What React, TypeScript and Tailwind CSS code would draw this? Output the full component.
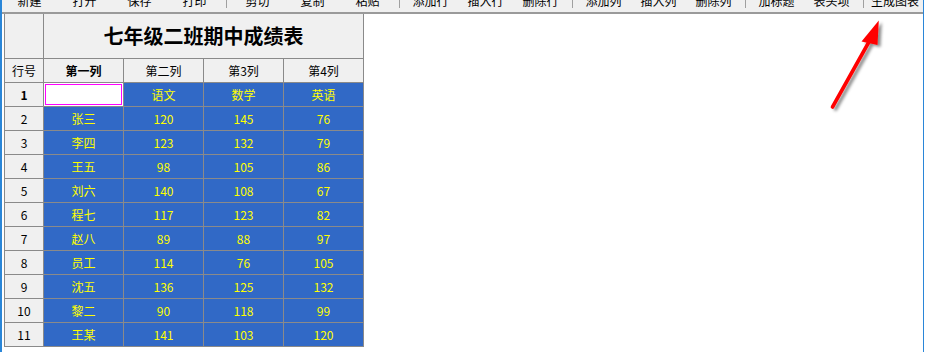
import React from 'react';

// ─── Data ─────────────────────────────────────────────────────────────────────

type ToolItem = { label: string } | 'sep';

const tools: ToolItem[] = [
    { label: '新建' },
    { label: '打开' },
    { label: '保存' },
    { label: '打印' },
    'sep',
    { label: '剪切' },
    { label: '复制' },
    { label: '粘贴' },
    'sep',
    { label: '添加行' },
    { label: '插入行' },
    { label: '删除行' },
    'sep',
    { label: '添加列' },
    { label: '插入列' },
    { label: '删除列' },
    'sep',
    { label: '加标题' },
    { label: '表头项' },
    'sep',
    { label: '生成图表' },
];

const rows: string[][] = [
    ['张三', '120', '145', '76'],
    ['李四', '123', '132', '79'],
    ['王五', '98', '105', '86'],
    ['刘六', '140', '108', '67'],
    ['程七', '117', '123', '82'],
    ['赵八', '89', '88', '97'],
    ['员工', '114', '76', '105'],
    ['沈五', '136', '125', '132'],
    ['黎二', '90', '118', '99'],
    ['王某', '141', '103', '120'],
];

const font = "font-['Segoe_UI','Noto_Sans_CJK_SC',sans-serif]";

// ─── Pieces ───────────────────────────────────────────────────────────────────

function Toolbar() {
    return (
        <div className="h-[12px] overflow-hidden bg-[#f0f0f0]">
            <div className="-mt-[9px] flex h-[20px] items-stretch">
                {tools.map((t, i) =>
                    t === 'sep' ? (
                        <div key={i} className="flex w-[8px] justify-center">
                            <div className="mt-[9px] h-[8px] w-px bg-[#a0a0a0]" />
                        </div>
                    ) : (
                        <div
                            key={i}
                            className={`flex items-center justify-center text-[12px] leading-[20px] text-black ${
                                i === tools.length - 1 ? 'w-[56px]' : 'w-[55px]'
                            }`}
                        >
                            {t.label}
                        </div>
                    ),
                )}
            </div>
        </div>
    );
}

function HeadCell({ children, bold }: { children?: React.ReactNode; bold?: boolean }) {
    return (
        <div
            className={`flex h-[23px] items-center justify-center bg-[#f0f0f0] text-[12px] text-black ${
                bold ? 'font-bold' : ''
            }`}
        >
            {children}
        </div>
    );
}

function DataCell({ children }: { children?: React.ReactNode }) {
    return (
        <div className="flex h-[23px] items-center justify-center bg-[#3169c6] text-[12px] text-[#ffff00]">
            {children}
        </div>
    );
}

function ScoreTable() {
    return (
        <div className="grid w-fit grid-cols-[38px_79px_79px_79px_79px] gap-px bg-[#8a8a8a] px-px pb-px">
            {/* title row */}
            <div className="h-[44px] bg-[#f0f0f0]" />
            <div className="col-span-4 flex h-[44px] items-center justify-center bg-[#f0f0f0] text-[20px] font-bold text-black">
                七年级二班期中成绩表
            </div>

            {/* column header row */}
            <HeadCell>行号</HeadCell>
            <HeadCell bold>第一列</HeadCell>
            <HeadCell>第二列</HeadCell>
            <HeadCell>第3列</HeadCell>
            <HeadCell>第4列</HeadCell>

            {/* row 1: subject names, first cell selected */}
            <HeadCell bold>1</HeadCell>
            <div className="h-[23px] bg-white p-px">
                <div className="h-full border border-[#ff00ff]" />
            </div>
            <DataCell>语文</DataCell>
            <DataCell>数学</DataCell>
            <DataCell>英语</DataCell>

            {rows.map((r, i) => (
                <React.Fragment key={i}>
                    <HeadCell>{i + 2}</HeadCell>
                    {r.map((v, j) => (
                        <DataCell key={j}>{v}</DataCell>
                    ))}
                </React.Fragment>
            ))}
        </div>
    );
}

function Arrow() {
    return (
        <svg className="pointer-events-none absolute left-0 top-0" width={929} height={352}>
            <defs>
                <filter id="sh" x="-50%" y="-50%" width="200%" height="200%">
                    <feDropShadow dx="3" dy="2" stdDeviation="1.6" floodColor="#000" floodOpacity="0.45" />
                </filter>
            </defs>
            <g filter="url(#sh)">
                <path d="M832.5 107 L870 40" stroke="#ff0000" strokeWidth={3.6} strokeLinecap="round" />
                <polygon points="878.8,20.5 861.5,41.5 877.5,45" fill="#ff0000" />
            </g>
        </svg>
    );
}

// ─── App ──────────────────────────────────────────────────────────────────────

export default function App() {
    return (
        <div className={`relative h-[352px] w-[929px] overflow-hidden bg-white ${font}`}>
            <div className="flex h-full">
                <div className="w-[2px] bg-[#2a86d8]" />
                <div className="flex min-w-0 flex-1 flex-col">
                    <Toolbar />
                    <div className="h-[2px] bg-[#9a9a9a]" />
                    <div className="flex-1 bg-white pl-[2px]">
                        <ScoreTable />
                    </div>
                </div>
                <div className="w-px bg-[#2a86d8]" />
                <div className="w-[5px] bg-white" />
            </div>
            <Arrow />
        </div>
    );
}
